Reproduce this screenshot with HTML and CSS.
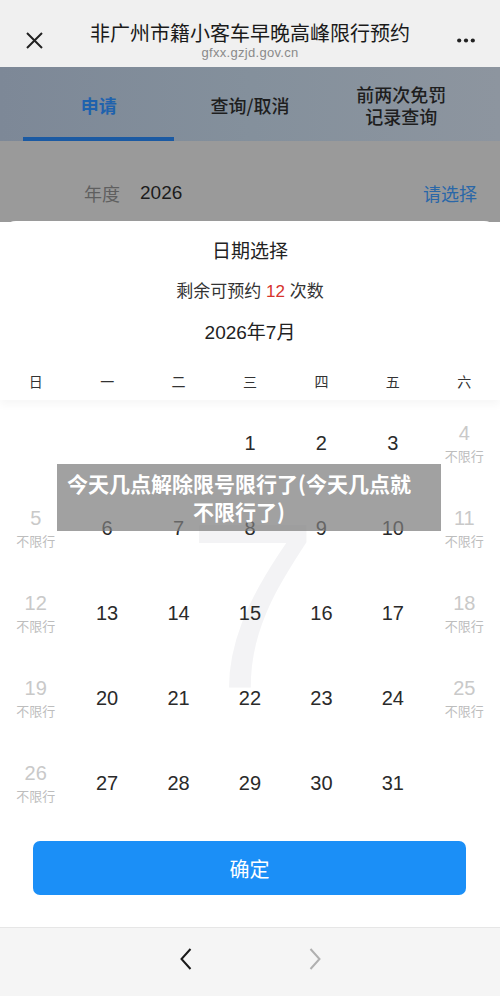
FILE: index.html
```html
<!DOCTYPE html>
<html lang="zh-CN">
<head>
<meta charset="utf-8">
<title>非广州市籍小客车早晚高峰限行预约</title>
<link rel="stylesheet" href="styles.css">
</head>
<body>
<div class="page">
  <header class="topbar">
    <svg class="icon-close" width="17" height="17" viewBox="0 0 17 17"><path d="M1 1 L16 16 M16 1 L1 16" stroke="#222" stroke-width="2" fill="none"/></svg>
    <div class="title-block">
      <div class="title">非广州市籍小客车早晚高峰限行预约</div>
      <div class="url">gfxx.gzjd.gov.cn</div>
    </div>
    <svg class="icon-more" width="18" height="5" viewBox="0 0 18 5"><circle cx="2.2" cy="2.5" r="2.1" fill="#222"/><circle cx="9" cy="2.5" r="2.1" fill="#222"/><circle cx="15.8" cy="2.5" r="2.1" fill="#222"/></svg>
  </header>

  <nav class="tabs">
    <div class="tab active"><div class="tab-label">申请</div><div class="tab-bar"></div></div>
    <div class="tab"><div class="tab-label">查询/取消</div><div class="tab-bar"></div></div>
    <div class="tab"><div class="tab-label two">前两次免罚<br>记录查询</div><div class="tab-bar"></div></div>
  </nav>

  <div class="yearrow">
    <span class="year-key">年度</span>
    <span class="year-val">2026</span>
    <span class="year-pick">请选择</span>
  </div>

  <section class="sheet">
    <h2 class="sheet-title">日期选择</h2>
    <p class="remain">剩余可预约 <span class="red">12</span> 次数</p>
    <p class="month">2026年7月</p>
    <div class="weekdays">
      <span>日</span><span>一</span><span>二</span><span>三</span><span>四</span><span>五</span><span>六</span>
    </div>
    <div class="grid">
      <div class="watermark">7</div>
      <div class="cell"></div><div class="cell"></div><div class="cell"></div>
      <div class="cell"><span class="num">1</span></div>
      <div class="cell"><span class="num">2</span></div>
      <div class="cell"><span class="num">3</span></div>
      <div class="cell off"><span class="num">4</span><span class="tag">不限行</span></div>

      <div class="cell off"><span class="num">5</span><span class="tag">不限行</span></div>
      <div class="cell"><span class="num">6</span></div>
      <div class="cell"><span class="num">7</span></div>
      <div class="cell"><span class="num">8</span></div>
      <div class="cell"><span class="num">9</span></div>
      <div class="cell"><span class="num">10</span></div>
      <div class="cell off"><span class="num">11</span><span class="tag">不限行</span></div>

      <div class="cell off"><span class="num">12</span><span class="tag">不限行</span></div>
      <div class="cell"><span class="num">13</span></div>
      <div class="cell"><span class="num">14</span></div>
      <div class="cell"><span class="num">15</span></div>
      <div class="cell"><span class="num">16</span></div>
      <div class="cell"><span class="num">17</span></div>
      <div class="cell off"><span class="num">18</span><span class="tag">不限行</span></div>

      <div class="cell off"><span class="num">19</span><span class="tag">不限行</span></div>
      <div class="cell"><span class="num">20</span></div>
      <div class="cell"><span class="num">21</span></div>
      <div class="cell"><span class="num">22</span></div>
      <div class="cell"><span class="num">23</span></div>
      <div class="cell"><span class="num">24</span></div>
      <div class="cell off"><span class="num">25</span><span class="tag">不限行</span></div>

      <div class="cell off"><span class="num">26</span><span class="tag">不限行</span></div>
      <div class="cell"><span class="num">27</span></div>
      <div class="cell"><span class="num">28</span></div>
      <div class="cell"><span class="num">29</span></div>
      <div class="cell"><span class="num">30</span></div>
      <div class="cell"><span class="num">31</span></div>
      <div class="cell"></div>
    </div>
    <div class="actions"><button class="confirm">确定</button></div>
  </section>

  <footer class="navbar">
    <svg width="12" height="22" viewBox="0 0 12 22"><polyline points="10.5,1 1.5,11 10.5,21" fill="none" stroke="#1a1a1a" stroke-width="2"/></svg>
    <svg width="12" height="22" viewBox="0 0 12 22"><polyline points="1.5,1 10.5,11 1.5,21" fill="none" stroke="#b0b0b0" stroke-width="2"/></svg>
  </footer>

  <div class="banner">今天几点解除限号限行了(今天几点就<br>不限行了)</div>
</div>
</body>
</html>
```

FILE: styles.css
```css
* { box-sizing: border-box; }
html, body { margin: 0; padding: 0; }
body {
  font-family: "Liberation Sans", "Noto Sans CJK SC", sans-serif;
  background: #ffffff;
  color: #222;
}
.page {
  position: relative;
  width: 500px;
  height: 996px;
  overflow: hidden;
  display: flex;
  flex-direction: column;
}

/* top bar */
.topbar {
  height: 67px;
  flex: none;
  background: #f0f0f0;
  display: flex;
  align-items: flex-start;
  padding: 0 25px 0 26px;
}
.icon-close { margin-top: 32px; flex: none; }
.icon-more { margin-top: 38px; flex: none; }
.title-block {
  flex: 1;
  text-align: center;
  padding-top: 20px;
}
.title {
  font-family: "Noto Sans CJK SC", sans-serif;
  font-size: 20px;
  line-height: 26px;
  font-weight: 400;
  color: #1a1a1a;
}
.url {
  font-size: 13px;
  line-height: 14px;
  color: #8a8a8a;
  letter-spacing: 0.3px;
}

/* tabs */
.tabs {
  height: 74px;
  flex: none;
  background: linear-gradient(90deg, #7d8897 0%, #84909c 50%, #8d959f 100%);
  display: grid;
  grid-template-columns: repeat(3, 1fr);
  padding: 0 23px;
}
.tab {
  display: flex;
  flex-direction: column;
}
.tab-label {
  flex: 1;
  display: flex;
  align-items: center;
  justify-content: center;
  text-align: center;
  padding-top: 6px;
  font-family: "Noto Sans CJK SC", sans-serif;
  font-size: 18px;
  font-weight: 500;
  line-height: 22px;
  color: #1e1e1e;
}
.tab.active .tab-label { color: #1f62ad; font-weight: 700; }
.tab-bar { height: 4px; }
.tab.active .tab-bar { background: #1b5aa3; }

/* year row */
.yearrow {
  height: 81px;
  flex: none;
  background: #9a9a9a;
  display: flex;
  align-items: flex-start;
  padding: 39px 23px 0 84px;
  line-height: 26px;
}
.year-key {
  font-family: "Noto Sans CJK SC", sans-serif;
  font-size: 18px;
  color: #5f5f5f;
}
.year-val {
  margin-left: 20px;
  font-size: 19px;
  color: #1c1c1c;
}
.year-pick {
  margin-left: auto;
  font-family: "Noto Sans CJK SC", sans-serif;
  font-size: 18px;
  color: #2a67a8;
}

/* sheet */
.sheet {
  flex: none;
  height: 706px;
  margin-top: -1px;
  background: #ffffff;
  border-radius: 16px 16px 0 0;
  display: flex;
  flex-direction: column;
  position: relative;
}
.sheet-title {
  margin: 0;
  height: 57px;
  line-height: 57px;
  text-align: center;
  font-family: "Noto Sans CJK SC", sans-serif;
  font-size: 19px;
  font-weight: 400;
  color: #222;
}
.remain {
  margin: 0;
  height: 28px;
  line-height: 28px;
  text-align: center;
  font-size: 17px;
  color: #333;
}
.remain .red { color: #d6332c; }
.month {
  margin: 0;
  height: 54px;
  line-height: 54px;
  text-align: center;
  font-size: 19px;
  color: #222;
}
.weekdays {
  height: 40px;
  padding: 4px 0 2px;
  display: grid;
  grid-template-columns: repeat(7, 1fr);
  line-height: 34px;
  text-align: center;
  font-family: "Noto Sans CJK SC", sans-serif;
  font-size: 14px;
  color: #333;
  box-shadow: 0 5px 8px rgba(0, 0, 0, 0.035);
  position: relative;
  z-index: 1;
}
.grid {
  position: relative;
  height: 425px;
  display: grid;
  grid-template-columns: repeat(7, 1fr);
  grid-auto-rows: 85px;
}
.watermark {
  position: absolute;
  left: 187px;
  top: 88px;
  font-size: 236px;
  line-height: 1;
  color: #f3f3f5;
  z-index: 0;
}
.cell {
  position: relative;
  z-index: 1;
  display: flex;
  flex-direction: column;
  align-items: center;
  justify-content: center;
  gap: 3px;
}
.num {
  font-size: 20px;
  line-height: 22px;
  color: #2a2a2a;
}
.cell.off .num { color: #c9c9c9; }
.tag {
  font-family: "Noto Sans CJK SC", sans-serif;
  font-size: 13px;
  line-height: 17px;
  color: #bdbdbd;
}
.actions {
  padding: 16px 34px 33px 33px;
}
.confirm {
  display: block;
  width: 100%;
  height: 54px;
  border: 0;
  border-radius: 7px;
  background: #1b8ff7;
  color: #ffffff;
  font-family: "Noto Sans CJK SC", sans-serif;
  font-size: 20px;
}

/* bottom nav */
.navbar {
  flex: 1;
  background: #f5f5f5;
  border-top: 1px solid #e6e6e6;
  display: flex;
  align-items: center;
  justify-content: center;
  gap: 117px;
  padding-bottom: 6px;
}

/* overlay banner */
.banner {
  position: absolute;
  left: 57px;
  top: 464px;
  width: 384px;
  height: 67px;
  padding: 5px 20px 0 0;
  background: rgba(125, 125, 125, 0.72);
  color: #ffffff;
  font-family: "Noto Sans CJK SC", sans-serif;
  font-size: 21px;
  font-weight: 700;
  line-height: 28px;
  text-align: center;
  z-index: 5;
}
```
